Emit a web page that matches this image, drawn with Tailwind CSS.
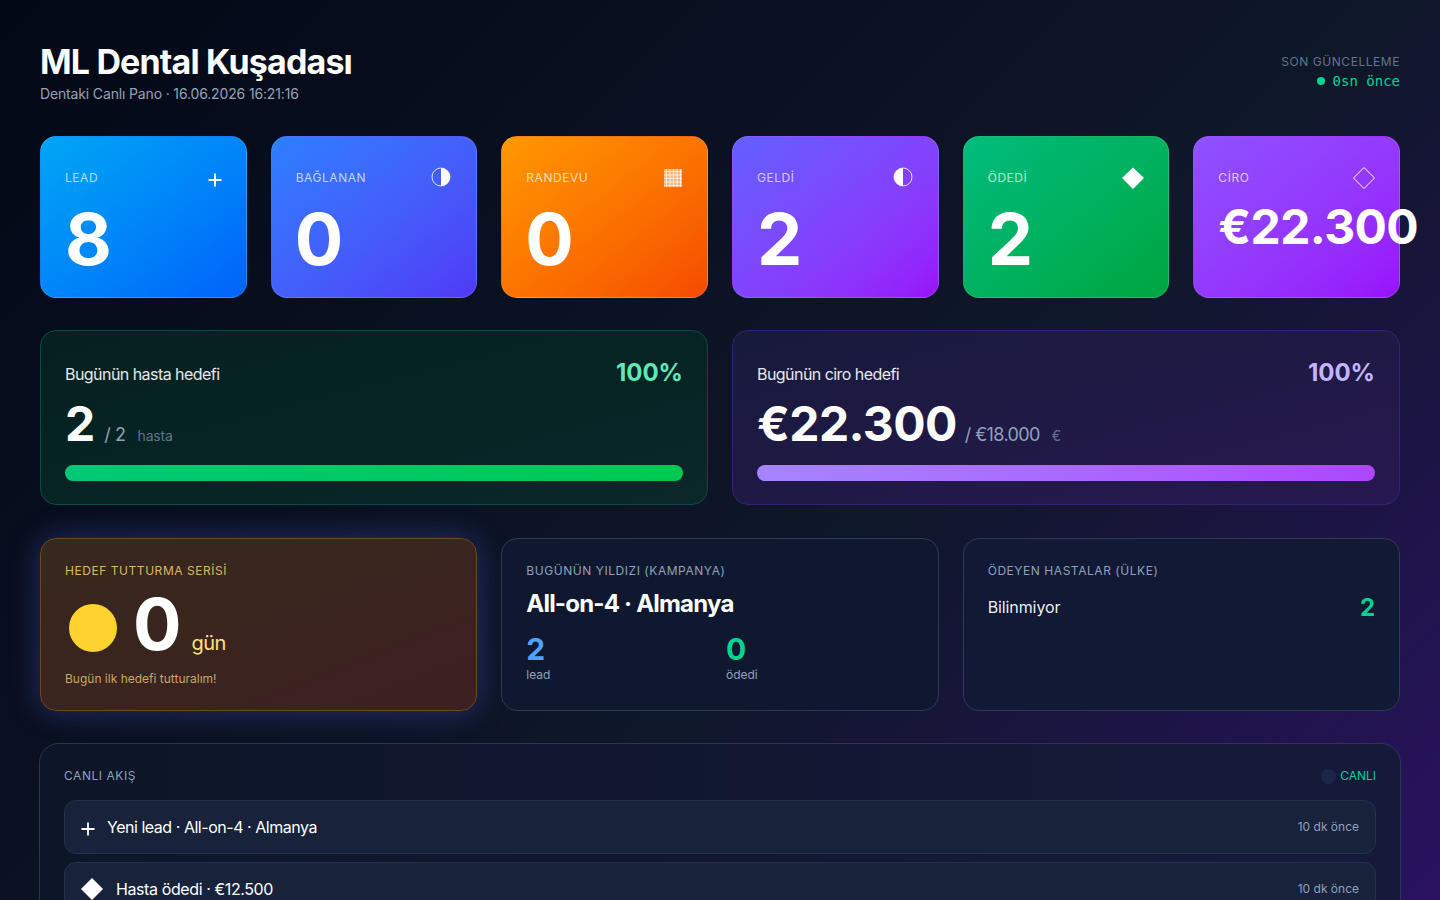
<!DOCTYPE html>
<html lang="tr">
<head>
    <meta charset="UTF-8">
    <meta name="viewport" content="width=device-width, initial-scale=1.0">
    <title>ML Dental Kuşadası</title>
    <script src="https://cdn.jsdelivr.net/npm/@tailwindcss/browser@4"></script>
</head>
<body class="h-screen overflow-hidden bg-linear-[135deg,#030816_0%,#0f172a_60%,#2a1260_100%] font-['Inter',sans-serif] text-white">
    <div class="px-10 pt-10">
        <!-- Header -->
        <header class="flex justify-between items-start h-[64px]">
            <div>
                <h1 class="text-[34px] leading-[43px] font-bold tracking-[-0.85px]">ML Dental Kuşadası</h1>
                <p class="text-sm leading-[22px] text-[#94a3b8] tracking-[-0.15px]">Dentaki Canlı Pano · 16.06.2026 16:21:16</p>
            </div>
            <div class="text-right pt-[14px]">
                <p class="text-xs leading-[16px] text-[#64748b] tracking-[0.55px]">SON GÜNCELLEME</p>
                <p class="text-sm leading-[20px] mt-[1px] text-[#00d492] font-['DejaVu_Sans_Mono',monospace] flex items-center justify-end gap-2"><span class="w-2 h-2 rounded-full bg-[#00d492]"></span><span>0sn önce</span></p>
            </div>
        </header>

        <!-- Funnel cards -->
        <section class="grid grid-cols-6 gap-6 mt-8">
            <div class="h-[162px] rounded-2xl border border-white/10 px-6 pt-[29px] bg-linear-to-br from-[#00a6f4] to-[#0062fa]">
                <div class="flex justify-between items-center h-[24px]">
                    <span class="text-xs tracking-[0.55px] text-white/70">LEAD</span>
                    <svg class="w-[14px] h-[14px] mt-[3px]" viewBox="0 0 14 14"><path d="M7 0.5v13M0.5 7h13" stroke="white" stroke-width="2"/></svg>
                </div>
                <div class="text-[72px] leading-[72px] font-bold mt-[13px]">8</div>
            </div>
            <div class="h-[162px] rounded-2xl border border-white/10 px-6 pt-[29px] bg-linear-to-br from-[#2b7fff] to-[#4f39f6]">
                <div class="flex justify-between items-center h-[24px]">
                    <span class="text-xs tracking-[0.55px] text-white/70">BAĞLANAN</span>
                    <svg class="w-5 h-5 mr-[1px] mb-[2px]" viewBox="0 0 20 20"><circle cx="10" cy="10" r="9" fill="none" stroke="white" stroke-opacity="0.8" stroke-width="1"/><path d="M10 1a9 9 0 0 1 0 18z" fill="white"/></svg>
                </div>
                <div class="text-[72px] leading-[72px] font-bold mt-[13px] -ml-px">0</div>
            </div>
            <div class="h-[162px] rounded-2xl border border-white/10 px-6 pt-[29px] bg-linear-to-br from-[#ff9800] to-[#f54a00]">
                <div class="flex justify-between items-center h-[24px]">
                    <span class="text-xs tracking-[0.55px] text-white/70">RANDEVU</span>
                    <svg class="w-[18px] h-[18px] mr-[1px] mb-[1px]" viewBox="0 0 18 18"><rect width="18" height="18" fill="white" fill-opacity="0.45"/><path d="M2.5 0v18M6 0v18M9.5 0v18M13 0v18M16.5 0v18M0 2.5h18M0 6h18M0 9.5h18M0 13h18M0 16.5h18" stroke="white" stroke-opacity="0.75" stroke-width="1"/></svg>
                </div>
                <div class="text-[72px] leading-[72px] font-bold mt-[13px] -ml-px">0</div>
            </div>
            <div class="h-[162px] rounded-2xl border border-white/10 px-6 pt-[29px] bg-linear-to-br from-[#615fff] to-[#9810fa]">
                <div class="flex justify-between items-center h-[24px]">
                    <span class="text-xs tracking-[0.55px] text-white/70">GELDİ</span>
                    <svg class="w-5 h-5 mr-[1px] mb-[2px]" viewBox="0 0 20 20"><circle cx="10" cy="10" r="9" fill="none" stroke="white" stroke-opacity="0.8" stroke-width="1"/><path d="M10 1a9 9 0 0 0 0 18z" fill="white"/></svg>
                </div>
                <div class="text-[72px] leading-[72px] font-bold mt-[13px]">2</div>
            </div>
            <div class="h-[162px] rounded-2xl border border-white/10 px-6 pt-[29px] bg-linear-to-br from-[#00bc7d] to-[#00a63e]">
                <div class="flex justify-between items-center h-[24px]">
                    <span class="text-xs tracking-[0.55px] text-white/70">ÖDEDİ</span>
                    <svg class="w-6 h-6 mb-[1px]" viewBox="0 0 24 24"><path d="M13 1.5L24 12L13 23L2 12z" fill="white"/></svg>
                </div>
                <div class="text-[72px] leading-[72px] font-bold mt-[13px]">2</div>
            </div>
            <div class="h-[162px] rounded-2xl border border-white/10 px-6 pt-[29px] bg-linear-to-br from-[#8e51ff] to-[#9810fa]">
                <div class="flex justify-between items-center h-[24px]">
                    <span class="text-xs tracking-[0.55px] text-white/70">CİRO</span>
                    <svg class="w-6 h-6 mb-[1px]" viewBox="0 0 24 24"><path d="M13 1.5L23.5 12L13 22.5L2.5 12z" fill="none" stroke="white" stroke-width="1"/></svg>
                </div>
                <div class="text-[48px] leading-[48px] font-bold mt-[13px] tracking-[-0.6px] whitespace-nowrap">€22.300</div>
            </div>
        </section>

        <!-- Targets -->
        <section class="grid grid-cols-2 gap-6 mt-8">
            <div class="h-[175px] rounded-2xl border border-[#0f4a40] px-6 pt-[30px] bg-linear-to-br from-[#04201f] to-[#0b2729]">
                <div class="flex justify-between items-start h-[36px]">
                    <span class="text-base leading-[24px] mt-[1px] text-white/90 tracking-[-0.55px]">Bugünün hasta hedefi</span>
                    <span class="text-2xl leading-[32px] -mt-[4px] font-bold text-[#5ee9b5]">100%</span>
                </div>
                <div class="flex items-baseline mt-[3px] h-[48px]">
                    <span class="text-[48px] leading-[48px] font-bold">2</span>
                    <span class="text-lg text-[#90a1b9] ml-[9px] tracking-[-0.4px]">/ 2</span>
                    <span class="text-sm text-[#62748e] ml-3 tracking-[-0.2px]">hasta</span>
                </div>
                <div class="h-4 rounded-full mt-[17px] bg-linear-to-r from-[#00c875] to-[#00c951]"></div>
            </div>
            <div class="h-[175px] rounded-2xl border border-[#38207a] px-6 pt-[30px] bg-linear-to-br from-[#171a3c] to-[#27184f]">
                <div class="flex justify-between items-start h-[36px]">
                    <span class="text-base leading-[24px] mt-[1px] text-white/90 tracking-[-0.55px]">Bugünün ciro hedefi</span>
                    <span class="text-2xl leading-[32px] -mt-[4px] font-bold text-[#c4b4ff]">100%</span>
                </div>
                <div class="flex items-baseline mt-[3px] h-[48px]">
                    <span class="text-[48px] leading-[48px] font-bold tracking-[-0.6px]">€22.300</span>
                    <span class="text-lg text-[#90a1b9] ml-[8px] tracking-[-0.6px]">/ €18.000</span>
                    <span class="text-sm text-[#62748e] ml-3">€</span>
                </div>
                <div class="h-4 rounded-full mt-[17px] bg-linear-to-r from-[#a684ff] to-[#ad46ff]"></div>
            </div>
        </section>

        <!-- Streak, star, countries -->
        <section class="grid grid-cols-3 gap-6 mt-[33px]">
            <div class="h-[173px] rounded-2xl border border-[#6b4a1c] px-6 pt-6 bg-linear-to-br from-[#37281c] to-[#3d2022] shadow-[0_0_30px_rgba(99,102,241,0.35)]">
                <p class="text-xs leading-[16px] tracking-[0.55px] text-[#dbb868]">HEDEF TUTTURMA SERİSİ</p>
                <div class="flex items-end mt-[9px] h-[72px]">
                    <span class="w-12 h-12 rounded-full bg-[#ffd230] ml-1 mb-[8px]"></span>
                    <span class="text-[72px] leading-[72px] font-bold ml-4 tracking-[-1px]">0</span>
                    <span class="text-xl text-[#ffe27a] ml-[11px] mb-[3px] tracking-[-0.6px]">gün</span>
                </div>
                <p class="text-xs leading-[16px] mt-[11px] text-[#c9a765]">Bugün ilk hedefi tutturalım!</p>
            </div>
            <div class="h-[173px] rounded-2xl border border-[#2e3a50] px-6 pt-6 bg-[#101830]">
                <p class="text-xs leading-[16px] tracking-[0.55px] text-[#90a1b9]">BUGÜNÜN YILDIZI (KAMPANYA)</p>
                <p class="text-2xl leading-[32px] font-bold mt-[9px] tracking-[-0.8px]">All-on-4 · Almanya</p>
                <div class="grid grid-cols-2 mt-[14px]">
                    <div>
                        <div class="text-3xl leading-[30px] font-bold text-[#51a2ff]">2</div>
                        <div class="text-xs leading-[16px] mt-[3px] text-[#90a1b9]">lead</div>
                    </div>
                    <div class="ml-[6px]">
                        <div class="text-3xl leading-[30px] font-bold text-[#00d492]">0</div>
                        <div class="text-xs leading-[16px] mt-[3px] text-[#90a1b9]">ödedi</div>
                    </div>
                </div>
            </div>
            <div class="h-[173px] rounded-2xl border border-[#2e3a50] px-6 pt-6 bg-[#121934]">
                <p class="text-xs leading-[16px] tracking-[0.55px] text-[#90a1b9]">ÖDEYEN HASTALAR (ÜLKE)</p>
                <div class="flex justify-between items-center mt-[12px] h-[32px]">
                    <span class="text-base text-white/95 tracking-[-0.1px]">Bilinmiyor</span>
                    <span class="text-2xl font-bold text-[#00d492] mt-[1px]">2</span>
                </div>
            </div>
        </section>

        <!-- Live feed -->
        <section class="-mx-px mt-8 rounded-[20px] border border-[#2c3650] px-6 pt-6 pb-6 bg-linear-to-r from-[#0d1528] to-[#161a3a]">
            <div class="flex justify-between items-center h-[16px]">
                <span class="text-xs tracking-[0.55px] text-[#90a1b9]">CANLI AKIŞ</span>
                <span class="flex items-center gap-[4px] text-xs text-[#00d492]"><span class="w-[15px] h-[15px] rounded-full bg-[#1a2747]"></span>CANLI</span>
            </div>
            <div class="flex flex-col gap-2 mt-4">
                <div class="h-[54px] rounded-xl border border-[#263149] bg-[#18223a] flex items-center justify-between pl-4 pr-4">
                    <span class="flex items-center gap-3">
                        <svg class="w-[14px] h-[14px] mt-[3px]" viewBox="0 0 14 14"><path d="M7 0.5v13M0.5 7h13" stroke="white" stroke-width="1.8"/></svg>
                        <span class="text-base tracking-[-0.47px]">Yeni lead · All-on-4 · Almanya</span>
                    </span>
                    <span class="text-xs text-[#90a1b9]">10 dk önce</span>
                </div>
                <div class="h-[54px] rounded-xl border border-[#263149] bg-[#18223a] flex items-center justify-between pl-4 pr-4">
                    <span class="flex items-center gap-[13px]">
                        <svg class="w-[22px] h-[22px]" viewBox="0 0 22 22"><path d="M11 0L22 11L11 22L0 11z" fill="white"/></svg>
                        <span class="text-base tracking-[-0.4px]">Hasta ödedi · €12.500</span>
                    </span>
                    <span class="text-xs text-[#90a1b9]">10 dk önce</span>
                </div>
            </div>
        </section>
    </div>
</body>
</html>
